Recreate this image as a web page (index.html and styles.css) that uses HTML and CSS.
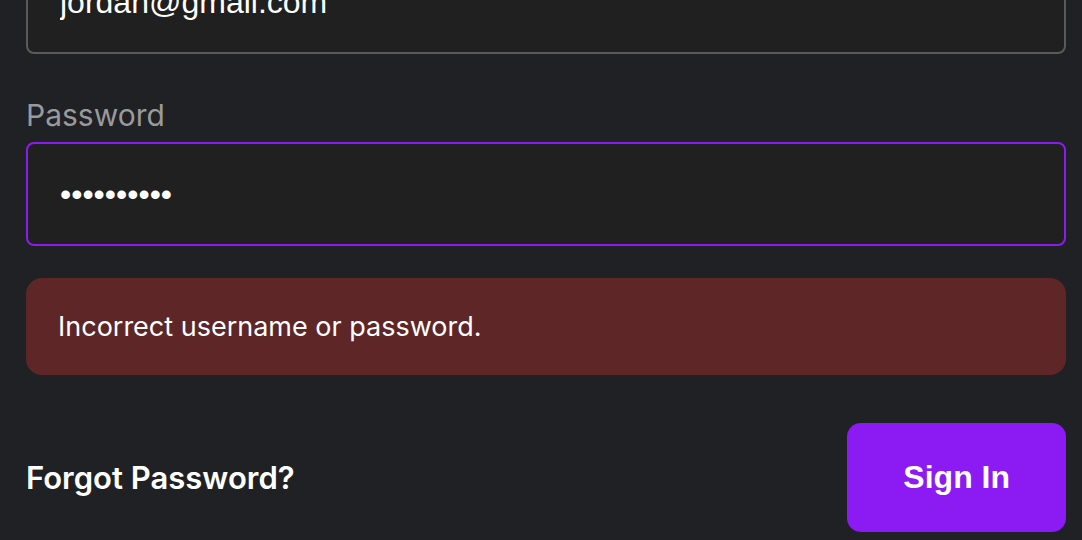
FILE: index.html
```html
<!DOCTYPE html>
<html>
<head>
<meta charset="utf-8">
<link rel="stylesheet" href="styles.css">
</head>
<body>
<form class="form" onsubmit="return false">
  <input class="field" type="email" value="jordan@gmail.com" aria-label="Email">
  <label class="label" for="pw">Password</label>
  <input class="field field--focus" id="pw" type="password" value="0123456789">
  <div class="error">Incorrect username or password.</div>
  <div class="actions">
    <a class="forgot" href="#">Forgot Password?</a>
    <button class="submit" type="submit">Sign In</button>
  </div>
</form>
</body>
</html>
```

FILE: styles.css
```css
html, body {
  margin: 0;
  padding: 0;
  background: #202125;
  overflow: hidden;
}

.form {
  display: flex;
  flex-direction: column;
  margin: -50px 16px 0 26px;
}

.field {
  box-sizing: border-box;
  height: 104px;
  width: 100%;
  margin: 0;
  padding: 0 32px;
  background: #202020;
  border: 2px solid #5a5a5a;
  border-radius: 8px;
  color: #ffffff;
  font-family: "Liberation Sans", Arial, sans-serif;
  font-size: 32px;
  outline: none;
}

.field--focus {
  border-color: #8a1cf0;
}

.label {
  margin: 40px 0 6px;
  font-family: Inter, "Noto Sans", sans-serif;
  font-size: 30px;
  line-height: 42px;
  color: #999a9c;
}

.error {
  margin-top: 32px;
  padding: 27px 32px;
  background: #5e2627;
  border-radius: 16px;
  color: #ffffff;
  font-family: Inter, "Noto Sans", sans-serif;
  font-size: 27px;
  line-height: 43px;
}

.actions {
  display: flex;
  justify-content: space-between;
  align-items: center;
  margin-top: 48px;
}

.forgot {
  font-family: Inter, "Noto Sans", sans-serif;
  font-size: 31px;
  font-weight: 600;
  color: #ffffff;
  text-decoration: none;
}

.submit {
  height: 109px;
  padding: 0 56px;
  border: none;
  border-radius: 14px;
  background: #8c1af3;
  color: #ffffff;
  font-family: "Liberation Sans", Arial, sans-serif;
  font-size: 32px;
  font-weight: 700;
}
```
